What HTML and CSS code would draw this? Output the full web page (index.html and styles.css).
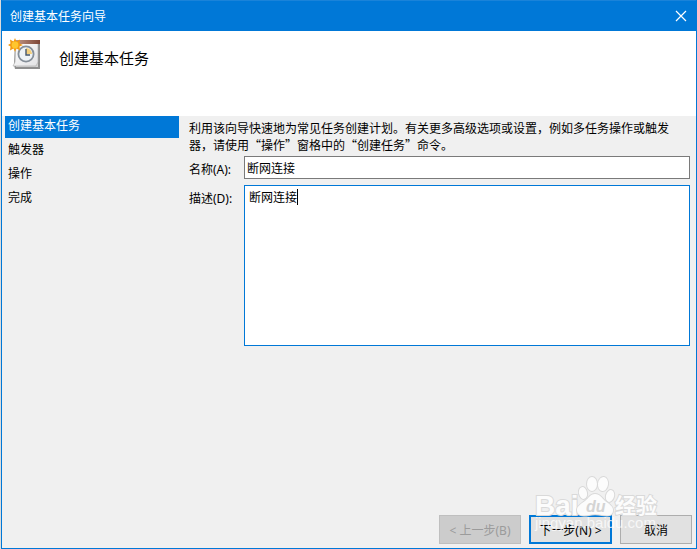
FILE: index.html
```html
<!DOCTYPE html>
<html lang="zh-CN">
  <head>
    <meta charset="UTF-8" />
    <meta name="viewport" content="width=device-width, initial-scale=1.0" />
    <title>创建基本任务向导</title>
    <link rel="stylesheet" href="styles.css">
  </head>
  <body>
    <div class="window">
      <header class="titlebar">
        <span>创建基本任务向导</span>
        <button class="close-btn" type="button" aria-label="关闭">
          <svg width="12" height="12" viewBox="0 0 12 12">
            <path d="M1 1 L11 11 M11 1 L1 11" stroke="#fff" stroke-width="1.2" fill="none" />
          </svg>
        </button>
      </header>

      <div class="banner">
        <svg class="task-icon" width="34" height="34" viewBox="0 0 34 34">
          <defs>
            <linearGradient id="page" x1="0" y1="0" x2="1" y2="1">
              <stop offset="0" stop-color="#ffffff" />
              <stop offset="1" stop-color="#e2e2e4" />
            </linearGradient>
            <linearGradient id="strip" x1="0" y1="0" x2="1" y2="0">
              <stop offset="0" stop-color="#c49a87" />
              <stop offset="1" stop-color="#7d4637" />
            </linearGradient>
          </defs>
          <path d="M7 4 H32 V31 H7 L6 27 Z" fill="#8f8f8f" />
          <path d="M7 5 H30 V29 H8 Z" fill="#d5d5d5" />
          <path d="M8 5 H30 V24 L28 28 H5 L7 24 Z" fill="url(#page)" stroke="#aaa" stroke-width="0.6" />
          <path d="M7 2 H32 V6 H7 Z" fill="url(#strip)" />
          <circle cx="18" cy="16" r="7.6" fill="#eef3f7" stroke="#858e98" stroke-width="1.8" />
          <path d="M18 16 V10 A6 6 0 0 1 24 16 Z" fill="#f3cf7d" />
          <path d="M18 11 V17 H22" fill="none" stroke="#46576a" stroke-width="1.4" />
          <path d="M7 0 L8.5 3.5 L12 1.5 L11.5 5.5 L15 7 L11.5 8.5 L12 12.5 L8.5 10.5 L7 14 L5.5 10.5 L2 12.5 L2.5 8.5 L0 7 L2.5 5.5 L2 1.5 L5.5 3.5 Z" fill="#f39a12" />
          <circle cx="7" cy="7" r="3.4" fill="#ffc62e" />
        </svg>
        <h1>创建基本任务</h1>
      </div>

      <div class="content">
        <nav class="steps">
          <a class="step active" href="#create" aria-current="step">创建基本任务</a>
          <a class="step" href="#trigger">触发器</a>
          <a class="step" href="#action">操作</a>
          <a class="step" href="#finish">完成</a>
        </nav>

        <form class="task-form" id="taskForm">
          <p class="intro">利用该向导快速地为常见任务创建计划。有关更多高级选项或设置，例如多任务操作或触发器，请使用“操作”窗格中的“创建任务”命令。</p>
          <div class="field">
            <label for="taskName">名称(A):</label>
            <input type="text" id="taskName" value="断网连接" />
          </div>
          <div class="field">
            <label for="taskDesc">描述(D):</label>
            <div class="desc-box">
              <textarea id="taskDesc">断网连接</textarea>
              <span class="caret"></span>
            </div>
          </div>
        </form>
      </div>

      <footer class="actions">
        <button class="btn btn-back" type="button" disabled>&lt; 上一步(B)</button>
        <button class="btn btn-next" type="submit" form="taskForm">下一步(N) &gt;</button>
        <button class="btn btn-cancel" type="button">取消</button>
      </footer>

      <svg class="watermark" width="130" height="66" viewBox="0 0 130 66">
        <g class="mark">
          <text class="mark-latin" x="4" y="43">Bai</text>
          <ellipse cx="52" cy="21" rx="4" ry="6" transform="rotate(-12 52 21)" />
          <ellipse cx="61" cy="12" rx="5" ry="7" />
          <ellipse cx="72" cy="12" rx="5" ry="7" transform="rotate(8 72 12)" />
          <ellipse cx="79" cy="24" rx="4" ry="6" transform="rotate(16 79 24)" />
          <path d="M64 22 C69 22 71 26 74 29 C78 32 82 34 82 38 C82 44 77 44 71 43 C66 42 62 42 58 43 C52 44 46 44 46 38 C46 34 50 32 54 29 C58 26 59 22 64 22 Z" />
          <text class="mark-cjk" x="84" y="41">经验</text>
        </g>
        <text class="mark-du" x="55" y="40">du</text>
        <text class="mark-url" x="4" y="56">jingyan.baidu.com</text>
      </svg>
    </div>
  </body>
</html>
```

FILE: styles.css
```css
* {
  box-sizing: border-box;
  margin: 0;
  padding: 0;
}

body {
  background-color: #dcdcdc;
  color: #000;
  font-family: "Noto Sans", "Noto Sans CJK SC", sans-serif;
  font-size: 12px;
}

button,
input,
textarea {
  font: inherit;
  color: inherit;
}

/* Window */
.window {
  position: relative;
  display: flex;
  flex-direction: column;
  min-height: 100vh;
  margin-left: 1px;
  border: 1px solid #0078d7;
  border-top: none;
  background-color: #f0f0f0;
}

.titlebar {
  display: flex;
  justify-content: space-between;
  align-items: center;
  height: 31px;
  padding-left: 8px;
  border-top: 1px solid #1a83d9;
  background-color: #0078d7;
  color: #fff;
}

.close-btn {
  display: flex;
  padding: 9px;
  border: none;
  background: none;
  cursor: pointer;
}

.banner {
  display: flex;
  gap: 17px;
  height: 85px;
  padding: 7px 6px;
  background-color: #fff;
}

.banner h1 {
  font-size: 15px;
  font-weight: normal;
  line-height: 40px;
}

/* Steps on the left, form on the right */
.content {
  display: flex;
  flex: 1;
  gap: 10px;
  padding: 0 6px 0 3px;
}

.steps {
  width: 174px;
}

.step {
  display: block;
  height: 24px;
  padding-left: 3px;
  color: #000;
  line-height: 20px;
  text-decoration: none;
}

.step.active {
  height: 22px;
  margin-bottom: 2px;
  background-color: #0078d7;
  color: #fff;
}

.task-form {
  display: flex;
  flex: 1;
  flex-direction: column;
  gap: 6px;
  padding-top: 3px;
}

.intro {
  height: 31px;
  padding-right: 12px;
  font-family: "Noto Sans CJK SC", sans-serif;
  line-height: 17px;
}

.field {
  display: flex;
}

.field label {
  width: 55px;
  line-height: 28px;
}

.field input {
  flex: 1;
  height: 23px;
  padding: 0 2px;
  border: 1px solid #7a7a7a;
  background-color: #fff;
}

.field:first-of-type {
  height: 23px;
}

.desc-box {
  position: relative;
  flex: 1;
}

.desc-box textarea {
  display: block;
  width: 100%;
  height: 161px;
  padding: 3px 4px;
  border: 1px solid #0078d7;
  outline: none;
  background-color: #fff;
  line-height: 17px;
  resize: none;
}

.caret {
  position: absolute;
  top: 4px;
  left: 53px;
  width: 1px;
  height: 16px;
  background-color: #000;
}

/* Buttons */
.actions {
  display: flex;
  justify-content: flex-end;
  gap: 8px;
  padding: 0 4px 4px;
}

.btn {
  width: 82px;
  height: 29px;
  border: 1px solid #adadad;
  background-color: #e1e1e1;
}

.btn-back {
  border-color: #bfbfbf;
  background-color: #ccc;
  color: #9b9b9b;
}

.btn-next {
  width: 83px;
  border: 2px solid #0078d7;
}

.btn-cancel {
  width: 72px;
}

/* Watermark over the bottom right corner */
.watermark {
  position: absolute;
  right: 35px;
  bottom: 10px;
  pointer-events: none;
}

.mark {
  fill: #fcfcfc;
  stroke: #d9d9d9;
  stroke-width: 2px;
  paint-order: stroke;
}

.mark-latin {
  font: bold 28px "Liberation Sans", sans-serif;
}

.mark-cjk {
  font: bold 21px "Noto Sans CJK SC", sans-serif;
}

.mark-du {
  fill: #d4d4d4;
  font: italic bold 16px "Liberation Sans", sans-serif;
}

.mark-url {
  fill: #fff;
  fill-opacity: 0.75;
  font: 15px "Liberation Sans", sans-serif;
}
```
